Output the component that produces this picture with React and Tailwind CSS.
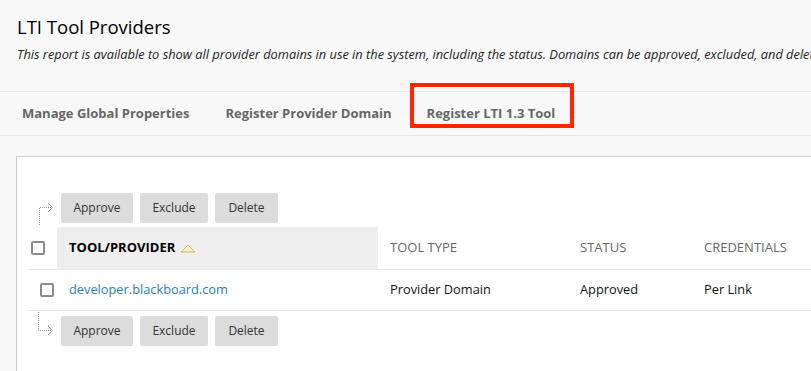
import React from 'react';

const font = { fontFamily: '"Open Sans", "Noto Sans", sans-serif' };

function Checkbox() {
    return <span className="block w-[14px] h-[14px] border-2 border-[#8a8a96] rounded-[2px] bg-white" />;
}

function ActionBar({ up }) {
    return (
        <div className="flex items-center h-[30px]">
            <div className="w-[44px] h-full relative">
                {up ? (
                    <svg width="44" height="30" className="absolute left-0 top-0 overflow-visible">
                        <path d="M22.5 32 V14.5 H35" stroke="#999" strokeDasharray="1 1" fill="none" />
                        <path d="M31 10 L35.5 14.5 L31 19" stroke="#999" fill="none" />
                    </svg>
                ) : (
                    <svg width="44" height="30" className="absolute left-0 top-0 overflow-visible">
                        <path d="M21.5 -4 V14.5 H35" stroke="#999" strokeDasharray="1 1" fill="none" />
                        <path d="M31 10 L35.5 14.5 L31 19" stroke="#999" fill="none" />
                    </svg>
                )}
            </div>
            <div className="flex gap-[7px]">
                <button className="h-[30px] w-[72px] bg-[#dcdcdc] rounded-[2px] text-[12px] text-[#333]">Approve</button>
                <button className="h-[30px] w-[68px] bg-[#dcdcdc] rounded-[2px] text-[12px] text-[#333]">Exclude</button>
                <button className="h-[30px] w-[63px] bg-[#dcdcdc] rounded-[2px] text-[12px] text-[#333]">Delete</button>
            </div>
        </div>
    );
}

export default function App() {
    return (
        <div className="w-[811px] h-[371px] overflow-hidden bg-[#f8f8f8]" style={font}>
            <div className="px-[17px] pt-[13px] h-[91px]">
                <h1 className="text-[18.5px] leading-[28px] text-black">LTI Tool Providers</h1>
                <p className="text-[12.8px] italic text-[#222] whitespace-nowrap mt-[4px]">
                    This report is available to show all provider domains in use in the system, including the status. Domains can be approved, excluded, and deleted.
                </p>
            </div>

            <div className="h-[45px] border-y border-[#e6e6e6] flex items-center text-[13px] font-bold text-[#666]">
                <span className="ml-[22px]">Manage Global Properties</span>
                <span className="ml-[36px]">Register Provider Domain</span>
                <span className="ml-[35px] relative">
                    Register LTI 1.3 Tool
                    <span className="absolute left-[-17px] top-[-21px] w-[164px] h-[45px] border-[4px] border-[#ff2600]" />
                </span>
            </div>

            <div className="mt-[20px] ml-[16px] bg-white border-l border-t border-[#cccccc] h-[300px] pl-[11px] pt-[36px]">
                <div className="-ml-[11px]">
                    <ActionBar up />
                </div>

                <div className="flex h-[43px] mt-[4px] border-b border-[#e8e8e8] text-[13px]">
                    <div className="w-[29px] flex items-center pl-[3px]">
                        <Checkbox />
                    </div>
                    <div className="w-[321px] bg-[#eeeeee] flex items-center pl-[12px] font-bold text-black">
                        TOOL/PROVIDER
                        <svg width="16" height="10" className="ml-[5px]">
                            <path d="M1 9 L8 2 L15 9 Z" fill="#fbf0c0" stroke="#cdb765" strokeWidth="1" />
                        </svg>
                    </div>
                    <div className="w-[190px] flex items-center pl-[12px] text-[#666]">TOOL TYPE</div>
                    <div className="w-[124px] flex items-center pl-[12px] text-[#666]">STATUS</div>
                    <div className="flex-1 flex items-center pl-[12px] text-[#666]">CREDENTIALS</div>
                </div>

                <div className="flex h-[41px] border-b border-[#e8e8e8] text-[12.8px] text-[#111]">
                    <div className="w-[29px] flex items-center pl-[12px]">
                        <Checkbox />
                    </div>
                    <div className="w-[321px] flex items-center pl-[12px] text-[#2a7db8]">developer.blackboard.com</div>
                    <div className="w-[190px] flex items-center pl-[12px]">Provider Domain</div>
                    <div className="w-[124px] flex items-center pl-[12px]">Approved</div>
                    <div className="flex-1 flex items-center pl-[12px]">Per Link</div>
                </div>

                <div className="-ml-[11px] mt-[5px]">
                    <ActionBar />
                </div>
            </div>
        </div>
    );
}
